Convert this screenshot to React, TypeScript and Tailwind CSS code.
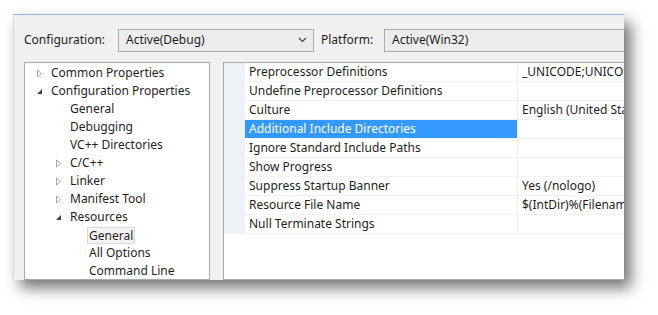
import React from 'react'

const font = { fontFamily: '"Noto Sans", "Liberation Sans", sans-serif' }

type TreeItem = { label: string; level: number; arrow?: 'open' | 'closed'; boxed?: boolean }

const tree: TreeItem[] = [
  { label: 'Common Properties', level: 0, arrow: 'closed' },
  { label: 'Configuration Properties', level: 0, arrow: 'open' },
  { label: 'General', level: 1 },
  { label: 'Debugging', level: 1 },
  { label: 'VC++ Directories', level: 1 },
  { label: 'C/C++', level: 1, arrow: 'closed' },
  { label: 'Linker', level: 1, arrow: 'closed' },
  { label: 'Manifest Tool', level: 1, arrow: 'closed' },
  { label: 'Resources', level: 1, arrow: 'open' },
  { label: 'General', level: 2, boxed: true },
  { label: 'All Options', level: 2 },
  { label: 'Command Line', level: 2 },
]

const props: [string, string][] = [
  ['Preprocessor Definitions', '_UNICODE;UNICODE;%(PreprocessorDefinitions)'],
  ['Undefine Preprocessor Definitions', ''],
  ['Culture', 'English (United States) (0x409)'],
  ['Additional Include Directories', ''],
  ['Ignore Standard Include Paths', ''],
  ['Show Progress', ''],
  ['Suppress Startup Banner', 'Yes (/nologo)'],
  ['Resource File Name', '$(IntDir)%(Filename).res'],
  ['Null Terminate Strings', ''],
]

const Arrow = ({ kind }: { kind: 'open' | 'closed' }) =>
  kind === 'closed' ? (
    <svg width="7" height="9" viewBox="0 0 7 9" className="shrink-0">
      <path d="M1.5 1 L5.5 4.5 L1.5 8 Z" fill="none" stroke="#a6a6a6" strokeWidth="1" />
    </svg>
  ) : (
    <svg width="7" height="9" viewBox="0 0 7 9" className="shrink-0">
      <path d="M6 2 L6 7 L1 7 Z" fill="#404040" />
    </svg>
  )

const Combo = ({ value, className }: { value: string; className: string }) => (
  <div className={`h-[23px] border border-[#acacac] bg-[#ececec] flex items-center pl-[7px] pr-[6px] ${className}`}>
    <span className="flex-1 text-[12px] text-[#1e1e1e] whitespace-nowrap">{value}</span>
    <svg width="9" height="6" viewBox="0 0 9 6">
      <path d="M1 1 L4.5 4.5 L8 1" fill="none" stroke="#404040" strokeWidth="1.2" />
    </svg>
  </div>
)

export default function App() {
  return (
    <div className="w-[658px] h-[315px] bg-white overflow-hidden pt-[14px] pl-[13px]" style={font}>
      <div className="w-[611px] h-[266px] bg-[#f0f0f0] border-t border-t-[#8db2e3] border-l border-l-[#dcdcdc] shadow-[7px_8px_14px_rgba(0,0,0,0.55)] overflow-hidden flex flex-col">
        {/* top combos */}
        <div className="flex items-center pl-[10px] pt-[13px] h-[37px] shrink-0 w-[700px]">
          <span className="text-[12px] text-[#1e1e1e] w-[94px]">Configuration:</span>
          <Combo value="Active(Debug)" className="w-[196px]" />
          <span className="text-[12px] text-[#1e1e1e] ml-[7px] w-[63px]">Platform:</span>
          <Combo value="Active(Win32)" className="w-[300px]" />
        </div>

        <div className="flex mt-[10px] pl-[10px] gap-[13px] flex-1 min-h-0 w-[720px]">
          {/* tree */}
          <div className="w-[186px] shrink-0 bg-white border border-[#a9a9a9] pt-px">
            {tree.map((t, i) => (
              <div
                key={i}
                className="h-[18px] flex items-center text-[12px] text-[#1e1e1e] whitespace-nowrap"
                style={{ paddingLeft: 11 + t.level * 19 }}
              >
                <span className="w-[15px] flex items-center">{t.arrow && <Arrow kind={t.arrow} />}</span>
                <span className={t.boxed ? 'border border-[#dadada] bg-[#f4f4f4] px-[1px] -ml-[2px] leading-[15px]' : ''}>{t.label}</span>
              </div>
            ))}
          </div>

          {/* property grid */}
          <div className="w-[500px] shrink-0 bg-white border border-[#a9a9a9]">
            <div className="flex">
              <div className="w-[21px] shrink-0 bg-[#eef2f8]" />
              <div className="flex-1">
                {props.map(([name, value], i) => (
                  <div key={i} className="h-[19px] flex border-b border-[#f3f3f3] text-[12px] whitespace-nowrap">
                    <div
                      className={`w-[273px] shrink-0 pl-[4px] flex items-center border-r border-[#f0f0f0] ${
                        i === 3 ? 'bg-[#3399ff] text-white' : 'text-[#1e1e1e]'
                      }`}
                    >
                      {name}
                    </div>
                    <div className="flex-1 pl-[4px] flex items-center text-[#1e1e1e] overflow-hidden">{value}</div>
                  </div>
                ))}
              </div>
            </div>
          </div>
        </div>
      </div>
    </div>
  )
}
